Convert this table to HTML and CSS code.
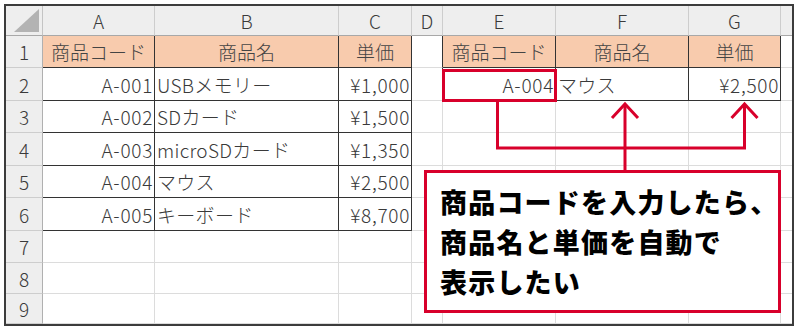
FILE: index.html
```html
<!DOCTYPE html>
<html lang="ja">
<head>
<meta charset="utf-8">
<link rel="stylesheet" href="styles.css">
</head>
<body>
<div class="sheet">
  <div class="grid">
    <div class="corner"><span class="tri"></span></div>
    <div class="ch">A</div><div class="ch">B</div><div class="ch">C</div><div class="ch">D</div><div class="ch">E</div><div class="ch">F</div><div class="ch">G</div><div class="ch"></div>

    <div class="rh">1</div>
    <div class="c t hd">商品コード</div><div class="c t hd">商品名</div><div class="c t hd">単価</div><div class="c edge"></div>
    <div class="c t hd">商品コード</div><div class="c t hd">商品名</div><div class="c t hd">単価</div><div class="c"></div>

    <div class="rh">2</div>
    <div class="c t r">A-001</div><div class="c t l">USBメモリー</div><div class="c t r">¥1,000</div><div class="c edge"></div>
    <div class="c t r">A-004</div><div class="c t l">マウス</div><div class="c t r">¥2,500</div><div class="c"></div>

    <div class="rh">3</div>
    <div class="c t r">A-002</div><div class="c t l">SDカード</div><div class="c t r">¥1,500</div><div class="c"></div>
    <div class="c"></div><div class="c"></div><div class="c"></div><div class="c"></div>

    <div class="rh">4</div>
    <div class="c t r">A-003</div><div class="c t l">microSDカード</div><div class="c t r">¥1,350</div><div class="c"></div>
    <div class="c"></div><div class="c"></div><div class="c"></div><div class="c"></div>

    <div class="rh">5</div>
    <div class="c t r">A-004</div><div class="c t l">マウス</div><div class="c t r">¥2,500</div><div class="c"></div>
    <div class="c"></div><div class="c"></div><div class="c"></div><div class="c"></div>

    <div class="rh">6</div>
    <div class="c t r">A-005</div><div class="c t l">キーボード</div><div class="c t r">¥8,700</div><div class="c"></div>
    <div class="c"></div><div class="c"></div><div class="c"></div><div class="c"></div>

    <div class="rh">7</div>
    <div class="c"></div><div class="c"></div><div class="c"></div><div class="c"></div>
    <div class="c"></div><div class="c"></div><div class="c"></div><div class="c"></div>

    <div class="rh">8</div>
    <div class="c"></div><div class="c"></div><div class="c"></div><div class="c"></div>
    <div class="c"></div><div class="c"></div><div class="c"></div><div class="c"></div>

    <div class="rh">9</div>
    <div class="c"></div><div class="c"></div><div class="c"></div><div class="c"></div>
    <div class="c"></div><div class="c"></div><div class="c"></div><div class="c"></div>
  </div>

  <svg class="marks" width="800" height="332" viewBox="0 0 800 332" aria-hidden="true">
    <g fill="none" stroke="#d8002b" stroke-width="3">
      <rect x="443.5" y="70.5" width="112" height="30"/>
      <polyline points="497.5,102 497.5,148 744.5,148 744.5,104"/>
      <line x1="625" y1="104" x2="625" y2="170"/>
      <polyline points="612,118 625,104 638,118"/>
      <polyline points="731.5,118 744.5,104 757.5,118"/>
    </g>
  </svg>

  <div class="callout">商品コードを入力したら、<br>商品名と単価を自動で<br>表示したい</div>
</div>
</body>
</html>
```

FILE: styles.css
```css
html, body {
  margin: 0;
  padding: 0;
  background: #ffffff;
}

body {
  width: 800px;
  height: 332px;
  overflow: hidden;
  font-family: "Noto Sans CJK JP", "Noto Sans", sans-serif;
}

.sheet {
  position: relative;
  margin: 4px 0 0 4px;
  width: 786px;
  height: 318px;
  border: 2px solid #3c3c3c;
}

.grid {
  display: grid;
  grid-template-columns: 37px 112px 184px 73px 31px 113px 133px 92px 12px;
  grid-template-rows: 30px 32px 33px 32px 33px 32px 33px 32px 31px 30px;
  width: 786px;
  height: 318px;
  overflow: hidden;
}

.grid > div {
  box-sizing: border-box;
  display: flex;
  align-items: center;
  font-size: 19px;
  font-weight: 300;
  color: #3a3a3a;
  white-space: nowrap;
  overflow: hidden;
}

.corner {
  background: #eeeeee;
  border-right: 1px solid #c4c4c4;
  border-bottom: 1px solid #a8a8a8;
  position: relative;
}

.tri {
  position: absolute;
  right: 3px;
  bottom: 3px;
  width: 0;
  height: 0;
  border-left: 25px solid transparent;
  border-bottom: 23px solid #b3b3b3;
}

.ch {
  background: #eeeeee;
  border-right: 1px solid #cdcdcd;
  border-bottom: 1px solid #a8a8a8;
  justify-content: center;
  color: #454545;
}

.rh {
  background: #eeeeee;
  border-right: 1px solid #b0b0b0;
  border-bottom: 1px solid #cdcdcd;
  justify-content: center;
  color: #454545;
}

.c {
  background: #ffffff;
  border-right: 1px solid #dcdcdc;
  border-bottom: 1px solid #dcdcdc;
  padding: 0 2px;
}

.c.t {
  border-right-color: #333333;
  border-bottom-color: #333333;
}

.c.edge {
  border-right-color: #333333;
}

.c.hd {
  background: #f8cbad;
  justify-content: center;
  color: #444444;
}

.c.r {
  justify-content: flex-end;
  letter-spacing: 0.7px;
  padding-right: 1px;
}

.c.l {
  justify-content: flex-start;
  letter-spacing: 0.3px;
}

.marks {
  position: absolute;
  left: -6px;
  top: -6px;
  pointer-events: none;
}

.callout {
  position: absolute;
  left: 418px;
  top: 164px;
  width: 357px;
  height: 143px;
  box-sizing: border-box;
  border: 3px solid #d8002b;
  background: #ffffff;
  padding: 9px 0 0 13px;
  font-size: 27px;
  line-height: 40px;
  font-weight: 900;
  letter-spacing: 1.2px;
  color: #000000;
  white-space: nowrap;
}
```
